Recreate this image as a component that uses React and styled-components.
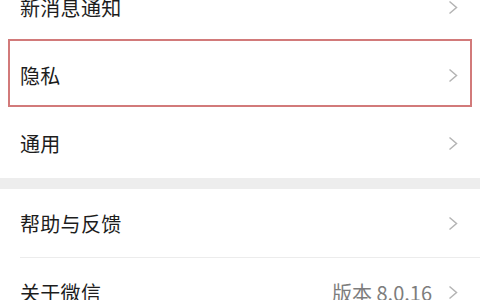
import React from 'react';
import styled, { createGlobalStyle } from 'styled-components';

const GlobalStyle = createGlobalStyle`
  body {
    margin: 0;
    background: #ffffff;
    font-family: "Noto Sans CJK SC", "Noto Sans", sans-serif;
    overflow: hidden;
  }
`;

const Page = styled.div`
  width: 480px;
  height: 300px;
  overflow: hidden;
  background: #ffffff;
`;

const List = styled.div`
  margin-top: -27px;
  display: flex;
  flex-direction: column;
`;

const Group = styled.div`
  display: flex;
  flex-direction: column;
  background: #ffffff;
`;

const Gap = styled.div`
  height: 11px;
  background: #ededed;
`;

const Row = styled.div`
  position: relative;
  height: ${p => p.$h || 68}px;
  display: flex;
  align-items: center;
  padding: 0 22px 0 20px;
  border-bottom: ${p => (p.$divider ? '1px solid #ebebeb' : 'none')};
  ${p =>
    p.$highlight &&
    `
    &::after {
      content: '';
      position: absolute;
      left: 8px;
      right: 8px;
      top: -2px;
      bottom: 2px;
      border: 2px solid #d27a7a;
      pointer-events: none;
    }
  `}
`;

const Divider = styled.div`
  height: 1px;
  margin-left: 20px;
  background: #ececec;
`;

const Label = styled.span`
  flex: 1;
  font-size: 20px;
  color: #1d1d1d;
  letter-spacing: 0.3px;
`;

const Value = styled.span`
  font-size: 20px;
  color: #7d7d7d;
  margin-right: 16px;
`;

const Chevron = () => (
  <svg width="10" height="15" viewBox="0 0 10 15">
    <path d="M1.5 1.5 L8.5 7.5 L1.5 13.5" fill="none" stroke="#b4b4b4" strokeWidth="1.5" />
  </svg>
);

export default function App() {
  return (
    <Page>
      <GlobalStyle />
      <List>
        <Group>
          <Row>
            <Label>新消息通知</Label>
            <Chevron />
          </Row>
          <Row $highlight>
            <Label>隐私</Label>
            <Chevron />
          </Row>
          <Row $h={69}>
            <Label>通用</Label>
            <Chevron />
          </Row>
        </Group>
        <Gap />
        <Group>
          <Row>
            <Label>帮助与反馈</Label>
            <Chevron />
          </Row>
          <Divider />
          <Row>
            <Label>关于微信</Label>
            <Value>版本 8.0.16</Value>
            <Chevron />
          </Row>
        </Group>
      </List>
    </Page>
  );
}
